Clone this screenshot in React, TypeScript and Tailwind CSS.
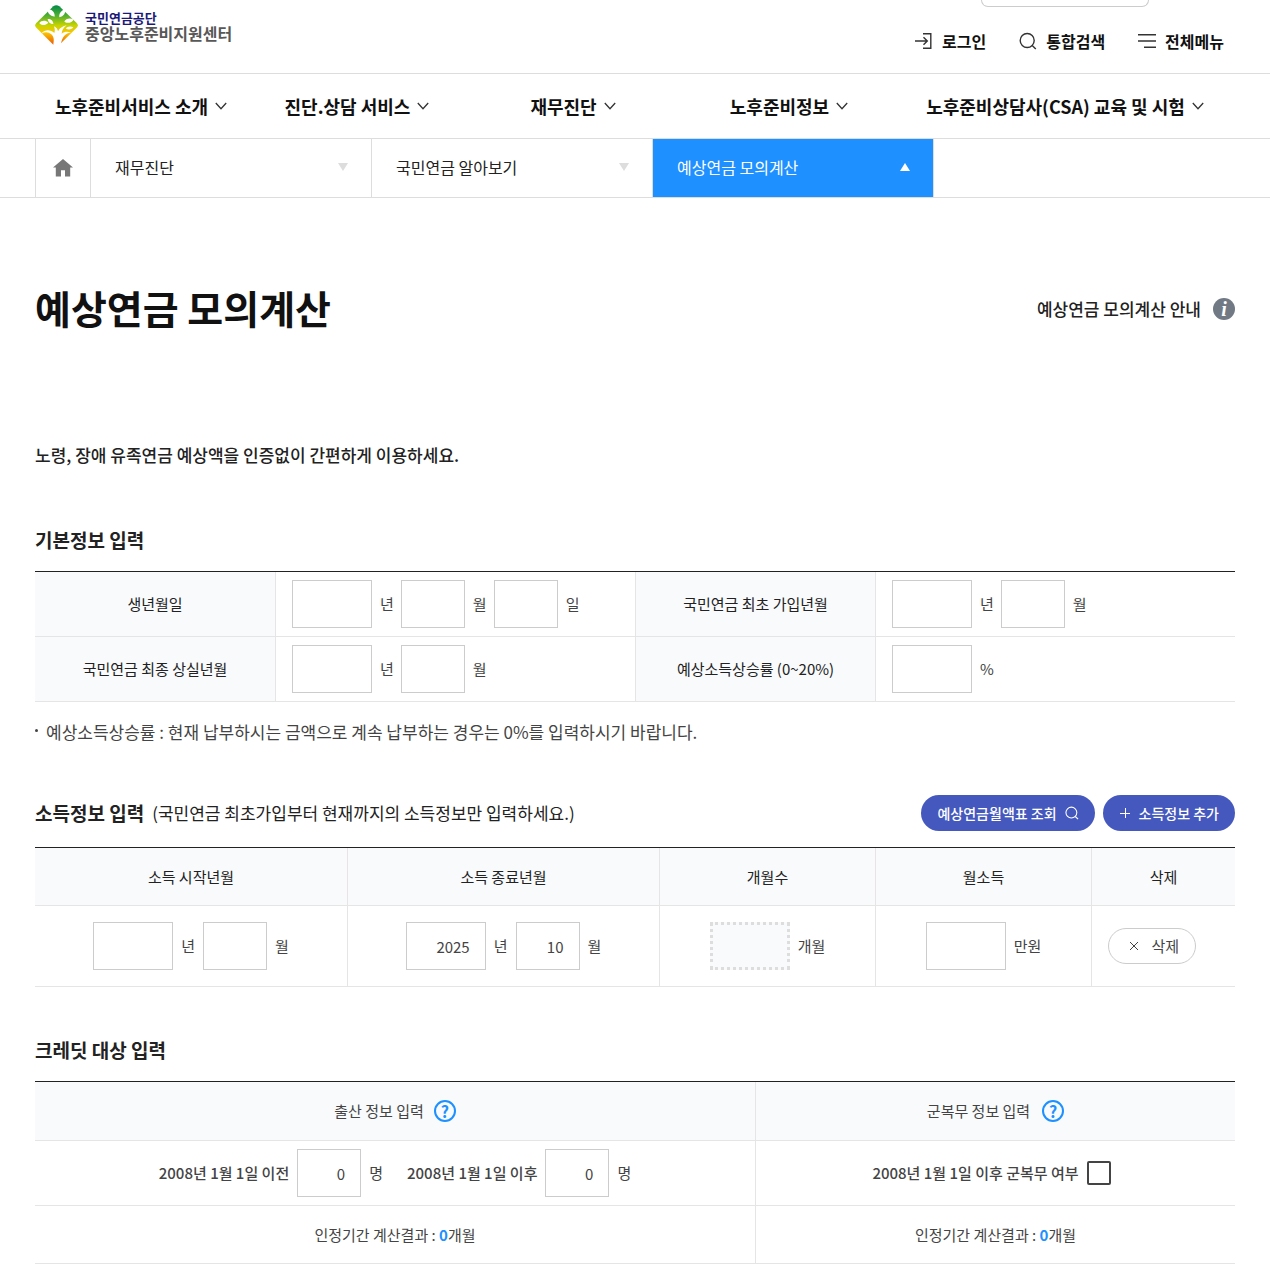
import { InputHTMLAttributes, ReactNode, useState } from 'react';
import clsx from 'clsx';

const menus = [
  '노후준비서비스 소개',
  '진단.상담 서비스',
  '재무진단',
  '노후준비정보',
  '노후준비상담사(CSA) 교육 및 시험',
];

const crumbs = [
  { label: '재무진단', active: false },
  { label: '국민연금 알아보기', active: false },
  { label: '예상연금 모의계산', active: true },
];

const Logo = () => (
  <a href="#" className="flex items-center gap-[7px]">
    <svg viewBox="0 0 129 123" className="h-[41px] w-[43px]" aria-hidden="true">
      <defs>
        <linearGradient id="logo-fill" x1="0" y1="0" x2="0" y2="1">
          <stop offset="0" stopColor="#008a4b" />
          <stop offset="0.25" stopColor="#4fae32" />
          <stop offset="0.5" stopColor="#c8d400" />
          <stop offset="0.68" stopColor="#fbc400" />
          <stop offset="0.85" stopColor="#f08300" />
          <stop offset="1" stopColor="#e8501e" />
        </linearGradient>
      </defs>
      <path
        d="M55 4Q64 -3 73 4L125 54Q132 61 125 68L73 119Q64 127 55 119L4 68Q-3 61 4 54Z"
        fill="url(#logo-fill)"
      />
      <g fill="#fff">
        <path d="M54 123C58 104 57 96 49 88C40 80 30 80 19 86C31 72 46 74 58 84C60 78 60 72 57 64C64 67 68 72 69 79C75 68 84 63 95 61C86 68 80 76 80 86C88 80 96 79 108 82C95 85 80 92 77 123Z" />
        <path d="M37 13C49 12 60 20 59 35C47 34 38 26 37 13Z" />
        <path d="M91 13C79 16 71 25 73 37C86 34 92 25 91 13Z" />
        <path d="M13 54C19 46 32 44 40 53C32 62 19 63 13 54Z" />
        <path d="M38 42C46 41 55 47 55 57C46 57 39 51 38 42Z" />
        <path d="M116 44C106 37 92 41 88 50C98 57 111 53 116 44Z" />
        <path d="M115 67C107 62 97 64 92 70C100 76 110 74 115 67Z" />
      </g>
    </svg>
    <span className="flex flex-col font-bold">
      <span className="text-[13px] leading-[15px] text-[#1c1a78]">국민연금공단</span>
      <span className="text-base leading-[17px] text-[#585858]">중앙노후준비지원센터</span>
    </span>
  </a>
);

const LoginIcon = () => (
  <svg viewBox="0 0 18 18" className="size-[18px]" fill="none" stroke="#333" strokeWidth="1.4" aria-hidden="true">
    <path d="M8 1.7H15.8V16.3H8M0 9H12M8.5 5.2L12.3 9L8.5 12.8" />
  </svg>
);

const SearchIcon = ({ className }: { className?: string }) => (
  <svg viewBox="0 0 18 18" className={className} fill="none" stroke="currentColor" strokeWidth="1.4" aria-hidden="true">
    <circle cx="8.2" cy="8.5" r="7" />
    <path d="M13.2 13.5L16.8 17" />
  </svg>
);

const MenuIcon = () => (
  <svg viewBox="0 0 18 18" className="size-[18px]" fill="none" stroke="#333" strokeWidth="1.4" aria-hidden="true">
    <path d="M0 2.7H18M0 9H18M6 15.3H18" />
  </svg>
);

const ChevronIcon = () => (
  <svg viewBox="0 0 12 8" className="h-2 w-3" fill="none" stroke="#333" strokeWidth="1.3" aria-hidden="true">
    <path d="M0.8 1L6 6.8L11.2 1" />
  </svg>
);

const HomeIcon = () => (
  <svg viewBox="0 0 20 18" className="h-[18px] w-5" fill="#777" aria-hidden="true">
    <path d="M10 0L20 8.6H17.2V17.5H12V11.3H8V17.5H2.8V8.6H0Z" />
  </svg>
);

type FieldProps = InputHTMLAttributes<HTMLInputElement> & {
  label: string;
  unit: string;
  narrow?: boolean;
};

const Field = ({ label, unit, narrow, readOnly, ...props }: FieldProps) => (
  <label className="flex items-center gap-2">
    <input
      type="text"
      aria-label={label}
      readOnly={readOnly}
      className={clsx(
        'h-12 px-[15px] text-right',
        narrow ? 'w-16' : 'w-20',
        readOnly
          ? 'border-3 border-dotted border-[#ddd] bg-[#f8fafc]'
          : 'border border-[#ccc] bg-white'
      )}
      {...props}
    />
    <span>{unit}</span>
  </label>
);

const HeadCell = ({ children, className }: { children: ReactNode; className?: string }) => (
  <th
    scope="col"
    className={clsx(
      'border-b border-l border-[#e5e5e5] bg-[#f8fafc] font-normal first:border-l-0',
      className
    )}
  >
    {children}
  </th>
);

const Cell = ({ children, className }: { children: ReactNode; className?: string }) => (
  <td className={clsx('border-b border-l border-[#e5e5e5] first:border-l-0', className)}>
    {children}
  </td>
);

const RowHead = ({ children }: { children: ReactNode }) => (
  <th
    scope="row"
    className="w-1/5 border-b border-l border-[#e5e5e5] bg-[#f8fafc] font-normal text-[#222] first:border-l-0"
  >
    {children}
  </th>
);

const HelpButton = ({ label }: { label: string }) => (
  <button
    type="button"
    aria-label={label}
    className="flex size-[22px] items-center justify-center rounded-full border-2 border-[#1e90ff] text-base leading-none font-bold text-[#1e90ff]"
  >
    ?
  </button>
);

const tableClass =
  'w-full table-fixed border-separate border-spacing-0 border-t border-[#222] text-[15px] leading-6 text-[#444]';

const App = () => {
  const [birthsBefore, setBirthsBefore] = useState('0');
  const [birthsAfter, setBirthsAfter] = useState('0');
  const [served, setServed] = useState(false);

  return (
    <div className="min-h-screen bg-white pb-3.5 font-['Noto_Sans_CJK_KR',sans-serif] text-[#222]">
      <header>
        <div className="border-b border-[#ddd]">
          <div className="mx-auto flex h-[73px] w-full max-w-[1200px] justify-between">
            <div className="pt-[5px]">
              <Logo />
            </div>
            <div className="flex flex-col items-center pr-[11px]">
              <div className="mr-2.5 h-[7px] w-[168px] rounded-b-[20px] border border-t-0 border-[#ccc]" />
              <div className="flex gap-[33px] pt-[22px] text-base leading-6 font-bold text-[#111]">
                <a href="#" className="flex items-center gap-[9px]">
                  <LoginIcon />
                  로그인
                </a>
                <button type="button" className="flex items-center gap-[9px]">
                  <SearchIcon className="size-[18px] text-[#333]" />
                  통합검색
                </button>
                <button type="button" className="flex items-center gap-[9px]">
                  <MenuIcon />
                  전체메뉴
                </button>
              </div>
            </div>
          </div>
        </div>
        <nav className="border-b border-[#ddd]">
          <ul className="mx-auto flex h-16 w-full max-w-[1200px] text-lg font-bold text-[#111]">
            {menus.map((menu) => (
              <li key={menu} className="w-[18%] last:w-[28%]">
                <a href="#" className="flex h-full items-center justify-center gap-[7px] pr-1 whitespace-nowrap">
                  {menu}
                  <ChevronIcon />
                </a>
              </li>
            ))}
          </ul>
        </nav>
        <nav className="border-b border-[#ddd]" aria-label="현재 위치">
          <div className="mx-auto flex h-[58px] w-full max-w-[1200px]">
            <a
              href="#"
              aria-label="홈"
              className="flex w-14 items-center justify-center border-x border-[#ddd]"
            >
              <HomeIcon />
            </a>
            {crumbs.map(({ label, active }) => (
              <button
                key={label}
                type="button"
                className={clsx(
                  'flex w-[281px] items-center justify-between border-r border-[#ddd] pr-[22px] pb-0.5 pl-6 text-base',
                  active ? 'bg-[#1e90ff] text-white' : 'text-[#222]'
                )}
              >
                {label}
                <svg
                  viewBox="0 0 12 8"
                  className={clsx('h-2 w-3', active ? 'rotate-180 text-white' : 'text-[#ddd]')}
                  fill="currentColor"
                  aria-hidden="true"
                >
                  <path d="M1 0H11L6 8Z" />
                </svg>
              </button>
            ))}
          </div>
        </nav>
      </header>

      <main className="mx-auto w-full max-w-[1200px]">
        <div className="flex items-center justify-between pt-[79px]">
          <h1 className="text-[39px] leading-[60px] font-bold text-[#111]">예상연금 모의계산</h1>
          <a href="#" className="flex items-center gap-3 pt-1 text-[17px] font-medium">
            예상연금 모의계산 안내
            <span className="flex size-[22px] items-center justify-center rounded-full bg-[#717985] font-['Liberation_Serif',serif] text-xl leading-none font-bold text-white italic">
              i
            </span>
          </a>
        </div>

        <p className="mt-[104px] text-[17px] leading-7 font-medium">
          노령, 장애 유족연금 예상액을 인증없이 간편하게 이용하세요.
        </p>

        <section className="mt-[57px]">
          <h2 className="text-[19px] leading-7 font-bold">기본정보 입력</h2>
          <table className={clsx(tableClass, 'mt-[17px]')}>
            <tbody>
              <tr>
                <RowHead>생년월일</RowHead>
                <Cell className="py-2 pl-4">
                  <div className="flex gap-[7px]">
                    <Field label="출생 년" unit="년" />
                    <Field label="출생 월" unit="월" narrow />
                    <Field label="출생 일" unit="일" narrow />
                  </div>
                </Cell>
                <RowHead>국민연금 최초 가입년월</RowHead>
                <Cell className="py-2 pl-4">
                  <div className="flex gap-[7px]">
                    <Field label="최초 가입 년" unit="년" />
                    <Field label="최초 가입 월" unit="월" narrow />
                  </div>
                </Cell>
              </tr>
              <tr>
                <RowHead>국민연금 최종 상실년월</RowHead>
                <Cell className="py-2 pl-4">
                  <div className="flex gap-[7px]">
                    <Field label="최종 상실 년" unit="년" />
                    <Field label="최종 상실 월" unit="월" narrow />
                  </div>
                </Cell>
                <RowHead>예상소득상승률 (0~20%)</RowHead>
                <Cell className="py-2 pl-4">
                  <Field label="예상소득상승률" unit="%" />
                </Cell>
              </tr>
            </tbody>
          </table>
          <ul className="mt-4 text-[17px] leading-7 text-[#444]">
            <li className="flex gap-2">
              <span className="mt-[11px] size-[3px] rounded-full bg-[#444]" />
              예상소득상승률 : 현재 납부하시는 금액으로 계속 납부하는 경우는 0%를 입력하시기 바랍니다.
            </li>
          </ul>
        </section>

        <section className="mt-[49px]">
          <div className="flex items-center justify-between">
            <div className="flex items-center gap-2">
              <h2 className="text-[19px] leading-7 font-bold">소득정보 입력</h2>
              <p className="text-[17px] leading-7">
                (국민연금 최초가입부터 현재까지의 소득정보만 입력하세요.)
              </p>
            </div>
            <div className="flex gap-2 text-sm font-medium text-white">
              <button type="button" className="flex h-9 items-center gap-2 rounded-full bg-[#4458bd] px-4">
                예상연금월액표 조회
                <SearchIcon className="size-3.5" />
              </button>
              <button type="button" className="flex h-9 items-center gap-2 rounded-full bg-[#4458bd] px-4">
                <svg viewBox="0 0 12 12" className="size-3" stroke="currentColor" aria-hidden="true">
                  <path d="M1 6.5H11M6.5 1V11" />
                </svg>
                소득정보 추가
              </button>
            </div>
          </div>
          <table className={clsx(tableClass, 'mt-4')}>
            <thead className="text-[#222]">
              <tr>
                <HeadCell className="h-[58px] w-[26%]">소득 시작년월</HeadCell>
                <HeadCell className="w-[26%]">소득 종료년월</HeadCell>
                <HeadCell className="w-[18%]">개월수</HeadCell>
                <HeadCell className="w-[18%]">월소득</HeadCell>
                <HeadCell className="w-[12%]">삭제</HeadCell>
              </tr>
            </thead>
            <tbody>
              <tr>
                <Cell className="py-4">
                  <div className="flex justify-center gap-2">
                    <Field label="소득 시작 년" unit="년" />
                    <Field label="소득 시작 월" unit="월" narrow />
                  </div>
                </Cell>
                <Cell className="py-4">
                  <div className="flex justify-center gap-2">
                    <Field label="소득 종료 년" unit="년" defaultValue="2025" />
                    <Field label="소득 종료 월" unit="월" narrow defaultValue="10" />
                  </div>
                </Cell>
                <Cell className="py-4">
                  <div className="flex justify-center">
                    <Field label="개월수" unit="개월" readOnly />
                  </div>
                </Cell>
                <Cell className="py-4">
                  <div className="flex justify-center">
                    <Field label="월소득" unit="만원" />
                  </div>
                </Cell>
                <Cell className="pl-4">
                  <button
                    type="button"
                    className="flex h-9 w-[88px] items-center justify-end gap-3 rounded-full border border-[#ccc] pr-4"
                  >
                    <svg viewBox="0 0 10 10" className="size-2.5" stroke="#444" aria-hidden="true">
                      <path d="M1 1L9 9M9 1L1 9" />
                    </svg>
                    삭제
                  </button>
                </Cell>
              </tr>
            </tbody>
          </table>
        </section>

        <section className="mt-[49px]">
          <h2 className="text-[19px] leading-7 font-bold">크레딧 대상 입력</h2>
          <table className={clsx(tableClass, 'mt-[17px]')}>
            <thead>
              <tr>
                <HeadCell className="h-[59px] w-3/5">
                  <div className="flex items-center justify-center gap-2.5">
                    출산 정보 입력
                    <HelpButton label="출산 정보 도움말" />
                  </div>
                </HeadCell>
                <HeadCell className="w-2/5">
                  <div className="flex items-center justify-center gap-3">
                    군복무 정보 입력
                    <HelpButton label="군복무 정보 도움말" />
                  </div>
                </HeadCell>
              </tr>
            </thead>
            <tbody>
              <tr>
                <Cell className="py-2">
                  <div className="flex items-center justify-center gap-6">
                    <div className="flex items-center gap-2">
                      <span className="font-medium">2008년 1월 1일 이전</span>
                      <Field
                        label="2008년 1월 1일 이전"
                        unit="명"
                        narrow
                        value={birthsBefore}
                        onChange={(e) => setBirthsBefore(e.target.value)}
                      />
                    </div>
                    <div className="flex items-center gap-2">
                      <span className="font-medium">2008년 1월 1일 이후</span>
                      <Field
                        label="2008년 1월 1일 이후"
                        unit="명"
                        narrow
                        value={birthsAfter}
                        onChange={(e) => setBirthsAfter(e.target.value)}
                      />
                    </div>
                  </div>
                </Cell>
                <Cell className="py-2">
                  <label className="flex items-center justify-center gap-2 pr-2 font-medium">
                    2008년 1월 1일 이후 군복무 여부
                    <input
                      type="checkbox"
                      checked={served}
                      onChange={(e) => setServed(e.target.checked)}
                      className="size-6 appearance-none rounded-xs border-2 border-[#444] bg-white checked:bg-[#444]"
                    />
                  </label>
                </Cell>
              </tr>
              <tr className="text-center">
                <Cell className="h-[58px]">
                  인정기간 계산결과 : <strong className="text-[#1e90ff]">0</strong>개월
                </Cell>
                <Cell>
                  인정기간 계산결과 : <strong className="text-[#1e90ff]">0</strong>개월
                </Cell>
              </tr>
            </tbody>
          </table>
        </section>
      </main>
    </div>
  );
};

export default App;
